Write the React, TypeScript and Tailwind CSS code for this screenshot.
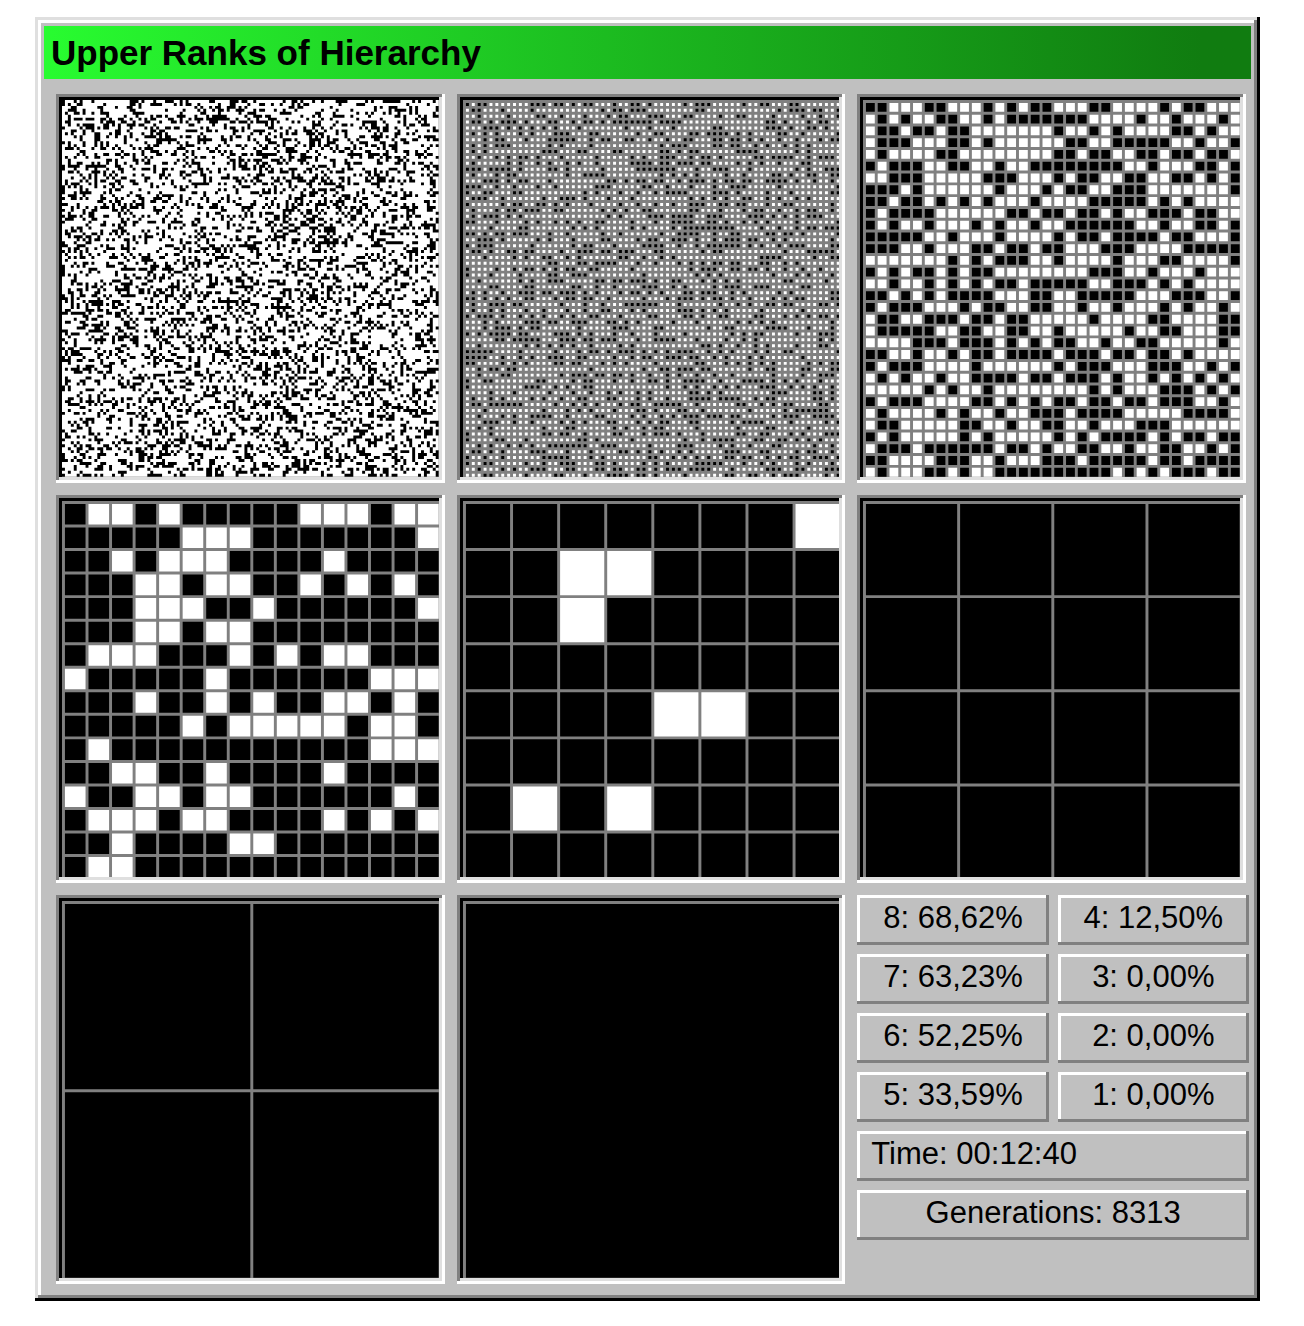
import React from "react";

type Grid = boolean[][];

const FIELD = 128;

const RANK_6 = [
  "11000110001010110001100001011000",
  "01010011001011111110000100100010",
  "01101101100000001001010000110100",
  "01110001101000000110011111001001",
  "01000011000000001101100110110110",
  "10111001100100111111110010001101",
  "00111000001110001011001100110101",
  "11101000000100010110011100000001",
  "11011010101000100001111101010000",
  "10111100000011011011010011101100",
  "10100100010100100111111001001101",
  "11111001000100001011011110110001",
  "11100100011011011000111000011111",
  "00000001010111001000010001100001",
  "10101101011000000001110010001000",
  "00100101010110111110011101010000",
  "11010101111000110011111000111001",
  "10111000101100110010010001010010",
  "01100111011011000001000011000011",
  "01111100110011001000001001100011",
  "00001110111010101100100110000010",
  "11001001011011110111011011010000",
  "10111000010000001011100011100101",
  "01010010011110110111010010101010",
  "00000101001000000001010001110101",
  "10111000011010101101101101110010",
  "01000010100100111011110000011110",
  "01100000110010011001000111000000",
  "10100000101000001010111101011011",
  "01110111111011010011001001100101",
  "11000011100100011101111101101111",
  "01000110100111111111101010111011",
];

const RANK_5 = [
  "1001011111000100",
  "1111100011111110",
  "1101000111101111",
  "1110010011010101",
  "1110001101111110",
  "1110010011111111",
  "1000111010100111",
  "0111110111111000",
  "1110110101100101",
  "1111101000001001",
  "1011111111111000",
  "1100110111101111",
  "0110010011111101",
  "1000100111101010",
  "1101111001111111",
  "1001111111111111",
];

const RANK_4 = [
  "11111110",
  "11001111",
  "11011111",
  "11111111",
  "11110011",
  "11111111",
  "10101111",
  "11111111",
];

const parse = (rows: string[]): Grid => rows.map((row) => [...row].map((c) => c === "1"));

const solid = (n: number): Grid => Array.from({ length: n }, () => Array(n).fill(true));

function randomSource(seed: number) {
  let s = seed;
  return () => {
    s = (s + 0x6d2b79f5) | 0;
    let t = Math.imul(s ^ (s >>> 15), 1 | s);
    t = (t + Math.imul(t ^ (t >>> 7), 61 | t)) ^ t;
    return ((t ^ (t >>> 14)) >>> 0) / 4294967296;
  };
}

// A cell is dark when at least two of its four children are dark.
function refine(parent: Grid, empty: number, two: number, three: number, seed: number): Grid {
  const next = randomSource(seed);
  const n = parent.length * 2;
  const child: Grid = Array.from({ length: n }, () => Array(n).fill(false));
  parent.forEach((row, y) =>
    row.forEach((dark, x) => {
      const r = next();
      const count = dark ? (r < two ? 2 : r < two + three ? 3 : 4) : r < empty ? 0 : 1;
      const slots = [0, 1, 2, 3];
      for (let i = 0; i < count; i++) {
        const slot = slots.splice(Math.floor(next() * slots.length), 1)[0];
        child[y * 2 + (slot >> 1)][x * 2 + (slot & 1)] = true;
      }
    })
  );
  return child;
}

const rank6 = parse(RANK_6);
const rank7 = refine(rank6, 0.3, 0.69, 0.27, 7);
const rank8 = refine(rank7, 0.35, 0.75, 0.22, 8);

const ranks: { rank: number; cells: Grid }[] = [
  { rank: 8, cells: rank8 },
  { rank: 7, cells: rank7 },
  { rank: 6, cells: rank6 },
  { rank: 5, cells: parse(RANK_5) },
  { rank: 4, cells: parse(RANK_4) },
  { rank: 3, cells: solid(4) },
  { rank: 2, cells: solid(2) },
  { rank: 1, cells: solid(1) },
];

function cellPath(cells: Grid, wanted: boolean) {
  const pitch = FIELD / cells.length;
  const line = pitch > 1 ? 1 : 0;
  const size = pitch - line;
  let d = "";
  cells.forEach((row, y) =>
    row.forEach((dark, x) => {
      if (dark === wanted) {
        d += `M${x * pitch + line} ${y * pitch + line}h${size}v${size}h${-size}z`;
      }
    })
  );
  return d;
}

function RankField({ rank, cells }: { rank: number; cells: Grid }) {
  const plain = cells.length === FIELD;
  return (
    <div className="aspect-square bg-[#808080] p-1.5 shadow-[inset_-3px_-3px_#fff,inset_3px_3px_#808080,inset_-6px_-6px_#dfdfdf,inset_6px_6px_#000]">
      <svg viewBox="0 0 128 128" className="block h-full w-full" role="img" aria-label={`Rank ${rank}`}>
        <rect width="128" height="128" fill={plain ? "#fff" : "#808080"} />
        {!plain && <path d={cellPath(cells, false)} fill="#fff" />}
        <path d={cellPath(cells, true)} fill="#000" />
      </svg>
    </div>
  );
}

function Readout({ children, wide, left }: { children: React.ReactNode; wide?: boolean; left?: boolean }) {
  return (
    <div
      className={`flex h-[50px] items-center whitespace-nowrap px-[14px] pb-1 shadow-[inset_-3px_-3px_#808080,inset_3px_3px_#fff] ${
        wide ? "col-span-2" : ""
      } ${left ? "justify-start" : "justify-center"}`}
    >
      {children}
    </div>
  );
}

export default function App() {
  return (
    <div className="min-h-screen bg-white pt-[17px] pr-11 pb-6 pl-[35px] text-black">
      <main className="bg-[#c0c0c0] p-1.5 shadow-[inset_-3px_-3px_#000,inset_3px_3px_#dfdfdf,inset_-6px_-6px_#808080,inset_6px_6px_#fff]">
        <header className="m-[3px] mb-0 flex h-[53px] items-center bg-linear-to-r from-[#28fc30] to-[#107c10] to-96% px-[7px]">
          <h1 className="font-['Liberation_Sans',Arial,sans-serif] text-[35px] leading-[40px] font-bold whitespace-nowrap">
            Upper Ranks of Hierarchy
          </h1>
        </header>
        <div className="grid grid-cols-3 gap-3 pt-[15px] pr-2 pb-[11px] pl-[15px]">
          {ranks.map((r) => (
            <RankField key={r.rank} rank={r.rank} cells={r.cells} />
          ))}
          <section className="-mr-[3px] grid grid-cols-2 content-start gap-[9px] font-['Liberation_Sans',Arial,sans-serif] text-[31px] leading-[40px]">
            <Readout>8: 68,62%</Readout>
            <Readout>4: 12,50%</Readout>
            <Readout>7: 63,23%</Readout>
            <Readout>3: 0,00%</Readout>
            <Readout>6: 52,25%</Readout>
            <Readout>2: 0,00%</Readout>
            <Readout>5: 33,59%</Readout>
            <Readout>1: 0,00%</Readout>
            <Readout wide left>
              Time: 00:12:40
            </Readout>
            <Readout wide>Generations: 8313</Readout>
          </section>
        </div>
      </main>
    </div>
  );
}
